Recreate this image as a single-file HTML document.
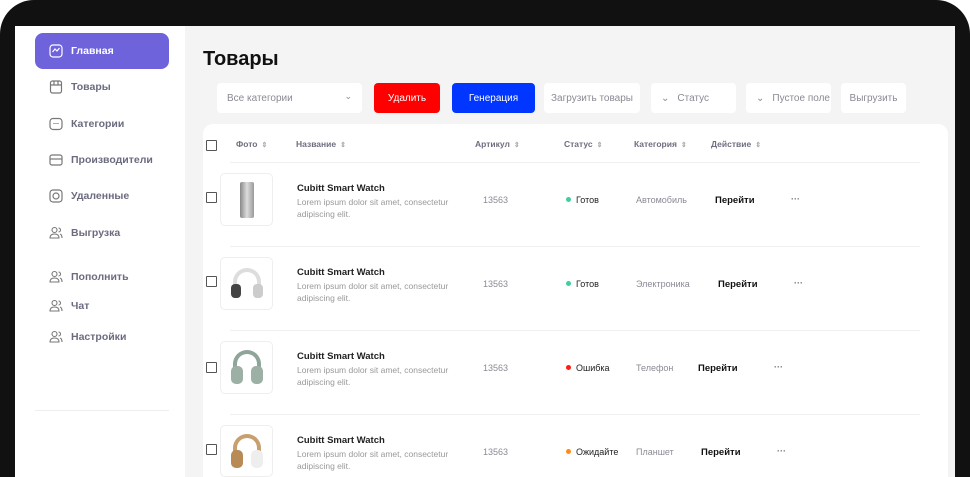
<!DOCTYPE html>
<html><head><meta charset="utf-8"><style>
*{margin:0;padding:0;box-sizing:border-box}
html,body{width:970px;height:477px;overflow:hidden}
body{background:#fff;font-family:"Liberation Sans",sans-serif;position:relative}
.frame{position:absolute;left:0;top:0;width:970px;height:477px;background:#111112;border-radius:34px 34px 0 0}
.screen{position:absolute;left:15px;top:26px;width:940px;height:451px;background:#f4f4f5;overflow:hidden}
.side{position:absolute;left:0;top:0;width:170px;height:451px;background:#fff}
.nav{position:absolute;left:20px;width:134px;height:36px;display:flex;align-items:center;font-size:10.5px;font-weight:bold;color:#6b6b80}
.nav.act{background:#6f63dc;color:#fff;border-radius:8px;top:7px}
.nav svg{margin:0 8px 0 14px}
.hr{position:absolute;left:20px;top:384px;width:134px;height:1px;background:#eee}
h1{position:absolute;left:188px;top:22px;font-size:20px;font-weight:bold;color:#111}
.b{position:absolute;top:57px;height:30px;border-radius:4px;background:#fff;font-size:10px;color:#8a8a95;display:flex;align-items:center}
.card{position:absolute;left:188px;top:98px;width:745px;height:353px;background:#fff;border-radius:10px 10px 0 0}
.th{position:absolute;top:113px;font-size:8.5px;font-weight:bold;color:#6e6e80}
.sort{color:#aaa;font-size:7px;margin-left:4px}
.cb{position:absolute;width:11px;height:11px;border:1.5px solid #555;border-radius:1px}
.line{position:absolute;left:215px;width:690px;height:1px;background:#f0f0f0}
.img{position:absolute;left:205px;width:53px;height:53px;border:1px solid #eee;border-radius:5px;background:#fff;overflow:hidden}
.t{position:absolute;left:282px;font-size:9.5px;font-weight:bold;color:#222}
.d{position:absolute;left:282px;font-size:8.5px;color:#999;line-height:12px;width:180px}
.g{position:absolute;font-size:9px;color:#8a8a95}
.s{position:absolute;font-size:9px;color:#222}
.s i{display:inline-block;width:5px;height:5px;border-radius:50%;margin-right:5px;vertical-align:1px}
.p{position:absolute;font-size:9.5px;font-weight:bold;color:#111}
.dots{position:absolute;font-size:9px;color:#777;font-weight:bold}
</style></head><body>
<div class="frame"></div>
<div class="screen">
<div class="side">
<div class="nav act"><svg width="14" height="14" viewBox="0 0 14 14" fill="none" stroke="#fff" stroke-width="1.2"><rect x="1" y="1" width="12" height="12" rx="3"/><path d="M3.5 8l2.5-3 2 2 2.5-3"/></svg>Главная</div>
<div class="nav" style="top:43px"><svg width="14" height="14" viewBox="0 0 14 14" fill="none" stroke="#777" stroke-width="1.2"><rect x="1.5" y="1" width="11" height="12" rx="2"/><path d="M1.5 5h11M5 1v4M9 1v4"/></svg>Товары</div>
<div class="nav" style="top:80px"><svg width="14" height="14" viewBox="0 0 14 14" fill="none" stroke="#777" stroke-width="1.2"><rect x="1" y="1.5" width="12" height="11" rx="3"/><path d="M5 6v1M7 6v1M9 6v1"/></svg>Категории</div>
<div class="nav" style="top:116px"><svg width="14" height="14" viewBox="0 0 14 14" fill="none" stroke="#777" stroke-width="1.2"><rect x="1" y="2" width="12" height="10" rx="2"/><path d="M1 6h12"/></svg>Производители</div>
<div class="nav" style="top:152px"><svg width="14" height="14" viewBox="0 0 14 14" fill="none" stroke="#777" stroke-width="1.2"><rect x="1" y="1" width="12" height="12" rx="3"/><circle cx="7" cy="7" r="3"/></svg>Удаленные</div>
<div class="nav" style="top:189px"><svg width="14" height="14" viewBox="0 0 14 14" fill="none" stroke="#777" stroke-width="1.1"><circle cx="5.5" cy="4" r="2.5"/><path d="M1 12c0-3 2-4 4.5-4s4.5 1 4.5 4z"/><path d="M9.5 2a2 2 0 010 4M11 8c1.5.5 2 2 2 4"/></svg>Выгрузка</div>
<div class="nav" style="top:233px"><svg width="14" height="14" viewBox="0 0 14 14" fill="none" stroke="#777" stroke-width="1.1"><circle cx="5.5" cy="4" r="2.5"/><path d="M1 12c0-3 2-4 4.5-4s4.5 1 4.5 4z"/><path d="M9.5 2a2 2 0 010 4M11 8c1.5.5 2 2 2 4"/></svg>Пополнить</div>
<div class="nav" style="top:262px"><svg width="14" height="14" viewBox="0 0 14 14" fill="none" stroke="#777" stroke-width="1.1"><circle cx="5.5" cy="4" r="2.5"/><path d="M1 12c0-3 2-4 4.5-4s4.5 1 4.5 4z"/><path d="M9.5 2a2 2 0 010 4M11 8c1.5.5 2 2 2 4"/></svg>Чат</div>
<div class="nav" style="top:293px"><svg width="14" height="14" viewBox="0 0 14 14" fill="none" stroke="#777" stroke-width="1.1"><circle cx="5.5" cy="4" r="2.5"/><path d="M1 12c0-3 2-4 4.5-4s4.5 1 4.5 4z"/><path d="M9.5 2a2 2 0 010 4M11 8c1.5.5 2 2 2 4"/></svg>Настройки</div>
<div class="hr"></div>
</div>
<h1>Товары</h1>
<div class="b" style="left:202px;width:145px;padding-left:10px">Все категории<span style="position:absolute;right:10px;top:8px;font-size:9px">&#8964;</span></div>
<div class="b" style="left:359px;width:66px;background:#fe0000;color:#fff;justify-content:center">Удалить</div>
<div class="b" style="left:437px;width:83px;background:#0036ff;color:#fff;justify-content:center">Генерация</div>
<div class="b" style="left:529px;width:96px;justify-content:center">Загрузить товары</div>
<div class="b" style="left:636px;width:85px;padding-left:10px"><span style="margin-right:8px">&#8964;</span>Статус</div>
<div class="b" style="left:731px;width:85px;padding-left:10px"><span style="margin-right:8px">&#8964;</span>Пустое поле</div>
<div class="b" style="left:826px;width:65px;justify-content:center">Выгрузить</div>
<div class="card"></div>
<div class="cb" style="left:191px;top:114px"></div>
<div class="th" style="left:221px">Фото<span class="sort">&#8661;</span></div>
<div class="th" style="left:281px">Название<span class="sort">&#8661;</span></div>
<div class="th" style="left:460px">Артикул<span class="sort">&#8661;</span></div>
<div class="th" style="left:549px">Статус<span class="sort">&#8661;</span></div>
<div class="th" style="left:619px">Категория<span class="sort">&#8661;</span></div>
<div class="th" style="left:696px">Действие<span class="sort">&#8661;</span></div>
<div class="line" style="top:136px"></div>
<div class="line" style="top:220px"></div>
<div class="line" style="top:304px"></div>
<div class="line" style="top:388px"></div>

<div class="cb" style="left:191px;top:166px"></div>
<div class="img" style="top:147px"><div style="position:absolute;left:19px;top:8px;width:14px;height:36px;border-radius:2px;background:linear-gradient(90deg,#888,#ddd,#999)"></div></div>
<div class="t" style="top:157px">Cubitt Smart Watch</div>
<div class="d" style="top:170px">Lorem ipsum dolor sit amet, consectetur adipiscing elit.</div>
<div class="g" style="left:468px;top:169px">13563</div>
<div class="s" style="left:551px;top:169px"><i style="background:#3ecf9c"></i>Готов</div>
<div class="g" style="left:621px;top:169px">Автомобиль</div>
<div class="p" style="left:700px;top:169px">Перейти</div>
<div class="dots" style="left:776px;top:168px">···</div>

<div class="cb" style="left:191px;top:250px"></div>
<div class="img" style="top:231px"><div style="position:absolute;left:12px;top:10px;width:28px;height:30px;border:4px solid #ddd;border-radius:14px 14px 6px 6px;border-bottom:none"></div><div style="position:absolute;left:10px;top:26px;width:10px;height:14px;background:#444;border-radius:4px"></div><div style="position:absolute;left:32px;top:26px;width:10px;height:14px;background:#ccc;border-radius:4px"></div></div>
<div class="t" style="top:241px">Cubitt Smart Watch</div>
<div class="d" style="top:254px">Lorem ipsum dolor sit amet, consectetur adipiscing elit.</div>
<div class="g" style="left:468px;top:253px">13563</div>
<div class="s" style="left:551px;top:253px"><i style="background:#3ecf9c"></i>Готов</div>
<div class="g" style="left:621px;top:253px">Электроника</div>
<div class="p" style="left:703px;top:253px">Перейти</div>
<div class="dots" style="left:779px;top:252px">···</div>

<div class="cb" style="left:191px;top:336px"></div>
<div class="img" style="top:315px"><div style="position:absolute;left:12px;top:8px;width:28px;height:30px;border:4px solid #8fa59a;border-radius:14px 14px 6px 6px;border-bottom:none"></div><div style="position:absolute;left:10px;top:24px;width:12px;height:18px;background:#9db0a6;border-radius:5px"></div><div style="position:absolute;left:30px;top:24px;width:12px;height:18px;background:#9db0a6;border-radius:5px"></div></div>
<div class="t" style="top:325px">Cubitt Smart Watch</div>
<div class="d" style="top:338px">Lorem ipsum dolor sit amet, consectetur adipiscing elit.</div>
<div class="g" style="left:468px;top:337px">13563</div>
<div class="s" style="left:551px;top:337px"><i style="background:#ff1a1a"></i>Ошибка</div>
<div class="g" style="left:621px;top:337px">Телефон</div>
<div class="p" style="left:683px;top:337px">Перейти</div>
<div class="dots" style="left:759px;top:336px">···</div>

<div class="cb" style="left:191px;top:418px"></div>
<div class="img" style="top:399px;height:52px"><div style="position:absolute;left:12px;top:8px;width:28px;height:30px;border:4px solid #c8a070;border-radius:14px 14px 6px 6px;border-bottom:none"></div><div style="position:absolute;left:10px;top:24px;width:12px;height:18px;background:#b88a55;border-radius:5px"></div><div style="position:absolute;left:30px;top:24px;width:12px;height:18px;background:#eee;border-radius:5px"></div></div>
<div class="t" style="top:409px">Cubitt Smart Watch</div>
<div class="d" style="top:422px">Lorem ipsum dolor sit amet, consectetur adipiscing elit.</div>
<div class="g" style="left:468px;top:421px">13563</div>
<div class="s" style="left:551px;top:421px"><i style="background:#ff8a1a"></i>Ожидайте</div>
<div class="g" style="left:621px;top:421px">Планшет</div>
<div class="p" style="left:686px;top:421px">Перейти</div>
<div class="dots" style="left:762px;top:420px">···</div>
</div>
</body></html>
